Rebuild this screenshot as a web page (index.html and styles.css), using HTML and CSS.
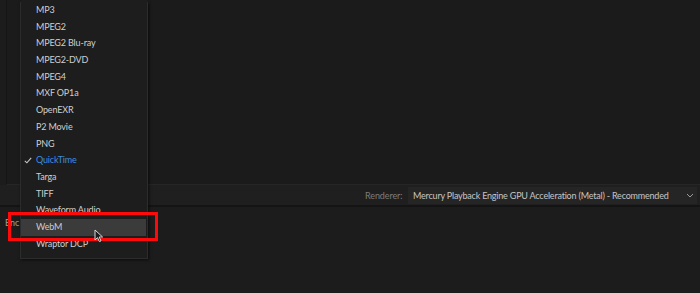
FILE: index.html
```html
<!DOCTYPE html>
<html>
<head>
<meta charset="utf-8">
<link rel="stylesheet" href="styles.css">
</head>
<body>
<div class="app">
  <div class="top-area"></div>
  <div class="renderer-row">
    <span class="renderer-label">Renderer:</span>
    <div class="select">
      <span class="select-text">Mercury Playback Engine GPU Acceleration (Metal) - Recommended</span>
      <svg class="chevron" width="8" height="5" viewBox="0 0 8 5"><path d="M1 1 L4 4 L7 1" fill="none" stroke="#9a9a9a" stroke-width="1"/></svg>
    </div>
  </div>
  <div class="bottom-area">
    <span class="enc-label">Enc</span>
  </div>

  <ul class="menu">
    <li class="item">MP3</li>
    <li class="item">MPEG2</li>
    <li class="item">MPEG2 Blu-ray</li>
    <li class="item">MPEG2-DVD</li>
    <li class="item">MPEG4</li>
    <li class="item">MXF OP1a</li>
    <li class="item">OpenEXR</li>
    <li class="item">P2 Movie</li>
    <li class="item">PNG</li>
    <li class="item checked"><svg class="check" width="8" height="7" viewBox="0 0 8 7"><path d="M0.8 3.8 L2.9 5.8 L7.2 0.8" fill="none" stroke="#c8c8c8" stroke-width="1.1"/></svg>QuickTime</li>
    <li class="item">Targa</li>
    <li class="item">TIFF</li>
    <li class="item">Waveform Audio</li>
    <li class="item hover">WebM</li>
    <li class="item">Wraptor DCP</li>
  </ul>

  <div class="highlight-box"></div>

  <svg class="cursor" width="10" height="14" viewBox="0 0 10 14">
    <path d="M1 1 L1 11 L3.5 8.6 L5.4 12.6 L7 11.9 L5.2 8 L8.6 8 Z" fill="#1c1c1c" stroke="#d8d8d8" stroke-width="1"/>
  </svg>
</div>
</body>
</html>
```

FILE: styles.css
```css
* { box-sizing: border-box; }
html, body {
  margin: 0;
  padding: 0;
  background: #1c1c1c;
}
body {
  width: 700px;
  height: 293px;
  overflow: hidden;
  font-family: "Lato", "Liberation Sans", sans-serif;
}
.app {
  position: relative;
  width: 700px;
  height: 293px;
  display: flex;
  flex-direction: column;
  background: #1c1c1c;
}
.top-area {
  height: 185px;
  background: #1b1b1b;
  border-left: 1px solid #151515;
  margin-left: 6px;
  border-bottom: 1px solid #262626;
}
.renderer-row {
  height: 22px;
  background: #1f1f1f;
  border-bottom: 2px solid #141414;
  display: flex;
  align-items: center;
  padding-left: 365px;
}
.renderer-label {
  font-size: 9px;
  letter-spacing: -0.1px;
  color: #7d7d7d;
  width: 43px;
  white-space: nowrap;
}
.select {
  flex: 1;
  height: 17px;
  margin-right: 3px;
  background: #252525;
  display: flex;
  align-items: center;
  padding-left: 5px;
  padding-right: 3px;
}
.select-text {
  flex: 1;
  font-size: 9px;
  letter-spacing: -0.2px;
  color: #c6c6c6;
  white-space: nowrap;
}
.chevron { display: block; }
.bottom-area {
  flex: 1;
  background: #1c1c1c;
  padding-left: 5px;
  padding-top: 3px;
}
.enc-label {
  font-size: 9px;
  color: #a0a0a0;
}

.menu {
  position: absolute;
  left: 20px;
  top: 2px;
  width: 128px;
  margin: 0;
  padding: 0 0 6px 0;
  list-style: none;
  background: #1d1d1d;
  border: 1px solid #2c2c2c;
  border-top: none;
  box-shadow: 1px 1px 3px rgba(0,0,0,0.6);
}
.menu::before {
  content: "";
  position: absolute;
  left: 0;
  right: 0;
  top: -2px;
  height: 2px;
  background: #1d1d1d;
}
.item {
  position: relative;
  height: 16.7px;
  line-height: 16.7px;
  padding-left: 15px;
  font-size: 9px;
  letter-spacing: -0.15px;
  color: #cfcfcf;
  white-space: nowrap;
}
.item.checked { color: #3d8ee2; }
.check {
  position: absolute;
  left: 3px;
  top: 5px;
}
.item.hover {
  background: #3b3b3b;
  margin-right: 1px;
  color: #cdcdcd;
}

.highlight-box {
  position: absolute;
  left: 8px;
  top: 212px;
  width: 150px;
  height: 29px;
  border: 3px solid #ff0a0a;
}
.cursor {
  position: absolute;
  left: 94px;
  top: 229px;
}
```
